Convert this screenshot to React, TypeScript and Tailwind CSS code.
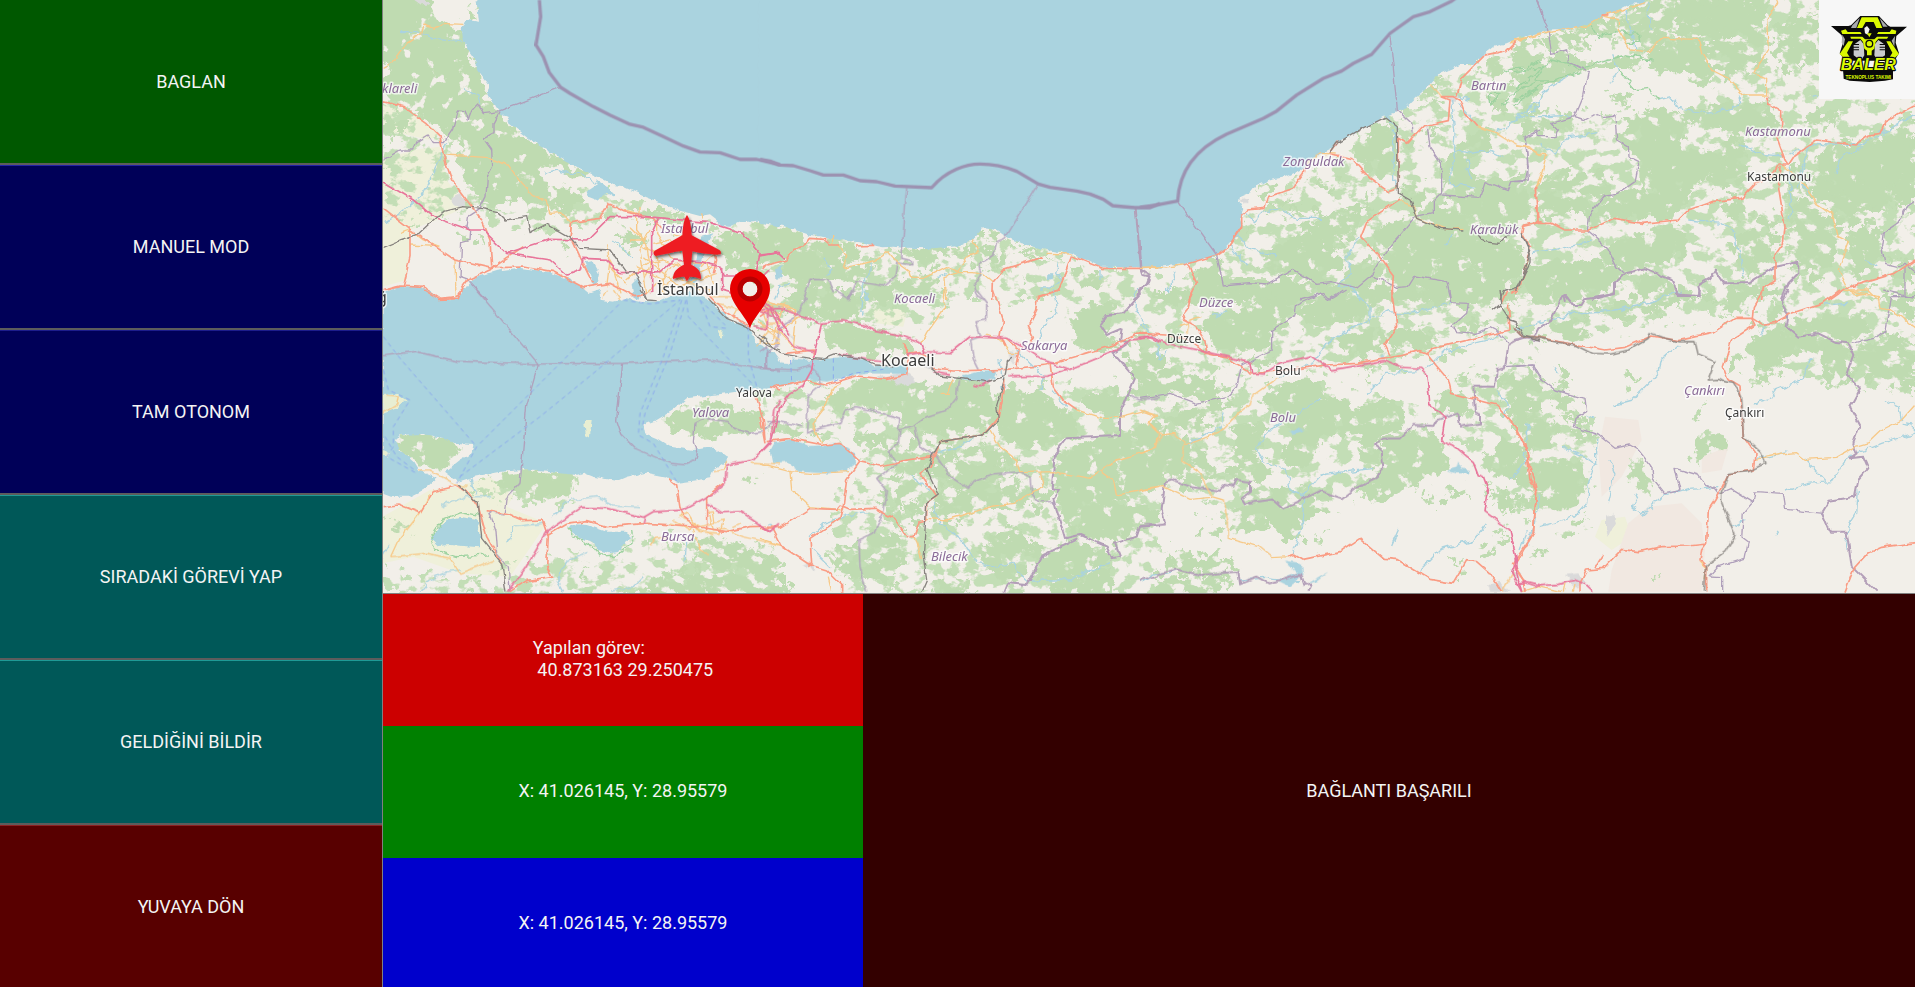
type Layer =
  | 'sea' | 'islet' | 'farm' | 'dry' | 'urban' | 'scatter' | 'dense' | 'sparse' | 'river' | 'park'
  | 'border' | 'province' | 'seaBorder' | 'rail' | 'primary' | 'trunk' | 'motorway' | 'ferry';

type Tile = { x: number; y: number } & Partial<Record<Layer, string[]>>;

/* The map is cut in tiles; path units inside a tile are a third of a map unit. */
const TILES: Tile[] = [
  {
    x: 380, y: 0,
    sea: [
      'M292 -30 1210 -30 1210 20 292 20Z',
      'M290 0 297 65 262 60 245 80 248 115 265 150 290 185 290 205 327 255 320 275 335 300 345 320 362 342 382 350 390 372 440 412 465 430 510 455 560 485 630 520 670 538 700 555 725 558 770 578 800 592 860 615 900 632 960 648 990 643 1015 662 1020 678 1050 680 1075 668 1130 662 1200 680 1200 0Z',
      'M225 900 245 880 270 845 300 828 350 812 420 803 500 815 560 835 600 855 630 880 635 900Z',
      'M8 872 60 858 130 862 180 895 240 900 8 900Z',
      'M612 785 635 780 657 820 650 850 640 852 625 815Z',
      'M620 575 650 555 648 538 680 560 710 590 700 592 680 578 650 600 625 590Z',
      'M755 850 775 830 785 880 775 900 760 890Z',
      'M950 760 965 710 1000 700 985 725 965 790 945 860 960 900 940 900 930 850Z',
    ],
    farm: ['M8 480 100 450 180 440 200 540 260 620 170 660 90 690 80 840 8 860Z', 'M8 310 100 340 180 400 150 420 60 400 8 400Z'],
    urban: ['M215 590 235 580 260 600 250 625 215 610Z', 'M100 0 150 0 150 10 120 14Z'],
    scatter: ['M8 300 100 330 200 420 240 500 330 620 560 640 560 560 640 560 800 610 960 650 1200 680 1200 860 1000 700 760 640 500 700 200 640 8 660Z'],
    dense: [
      'M-8 -20 150 -20 160 40 200 70 245 90 250 130 290 200 325 260 310 290 360 340 440 415 560 485 630 520 590 530 520 500 460 500 470 530 530 560 600 580 600 610 560 640 540 640 500 610 500 650 450 660 440 610 420 590 400 620 330 610 300 600 260 560 240 500 230 460 240 420 200 410 150 370 100 330 40 300 -8 240 30 200 -8 180Z',
      'M1010 705 1050 690 1090 690 1130 720 1140 780 1120 810 1070 820 1040 800 1030 760 1000 740Z',
      'M1130 670 1200 680 1200 760 1150 750 1130 700Z', 'M265 20 285 25 290 60 265 45Z',
    ],
    sparse: ['M8 330 60 340 70 380 50 420 8 400Z', 'M530 722 570 735 570 755 540 745Z', 'M288 712 310 710 305 750 293 745Z', 'M780 628 860 632 910 645 880 665 800 655Z', 'M720 690 800 720 770 750 720 735Z', 'M225 700 250 690 250 720 225 720Z'],
    river: ['M200 430 180 480 150 540 120 590 60 640 20 665', 'M60 95 110 95 160 115 245 122', 'M250 265 290 290 300 310', 'M490 520 530 510 560 520 600 520 620 530 650 550', 'M700 720 730 750 760 775'],
    seaBorder: ['M478 0 482 50 468 135 490 170 508 218 542 262 570 280 640 320 690 345 750 373 790 382 850 410 910 438 960 456 1020 458 1080 478 1130 478 1200 495'],
    province: ['M8 482 60 450 98 450 108 428 145 405 160 428 190 428 218 385 232 333 255 335 265 360 275 332 293 312 310 338 360 332 542 262', 'M360 335 342 370 342 398 310 415 335 450 338 500 322 530 318 590 300 625 262 650 258 680 272 692 270 718 245 725 240 832 262 840 320 900'],
    rail: ['M8 742 60 720 120 700 190 635 250 620 305 625 350 635 375 660 440 650 450 698 500 672 570 712 600 745 690 750 740 820 765 815 785 860 800 900'],
    primary: ['M8 202 40 185 80 130 125 100 132 75 165 85 190 70 250 73', 'M195 465 320 472 385 495 420 545 460 590 495 600 510 640 545 638 575 670 570 715', 'M225 780 228 890', 'M90 690 130 720 180 740 90 735', 'M90 690 60 700', 'M735 630 770 640 770 690 800 730 810 800 790 850', 'M750 680 790 720 750 720', 'M830 660 830 700 880 780 980 790 1000 850', 'M680 730 690 800 740 850', 'M790 770 900 860 1010 820', 'M680 860 690 780 700 800 720 880', 'M840 850 870 800 900 790 940 830 1000 800', 'M780 640 780 620', 'M810 690 780 750 800 880 830 850 870 860', 'M905 800 920 850 960 870', 'M970 660 965 640', 'M740 840 800 790 850 780 900 800', 'M820 730 870 720 900 760', 'M850 880 880 830 930 850 990 870', 'M960 800 990 770 1020 760', 'M770 800 850 840 850 880', 'M790 740 830 760 840 820', 'M880 700 940 720 990 750'],
    trunk: ['M8 305 70 320 140 370 180 410 190 465 215 540 260 600 305 660 330 720 335 800', 'M8 625 90 688 225 780 335 805 430 740', 'M90 690 90 770 70 860', 'M8 872 60 858 130 862 180 895 230 890 265 840 350 800 430 798 520 815 610 862 690 850 765 890 800 880', 'M570 712 575 668 660 655 685 612 735 635 820 655 850 690', 'M575 715 600 770 640 850', 'M1000 820 1010 780 1000 740'],
    motorway: ['M8 545 100 600 160 650 270 690 310 690 380 760 510 780 560 825 600 810 610 775 680 778 720 818 840 815 880 780 960 785 1020 800 1030 825 1080 825', 'M380 760 510 718 620 720 690 650 800 650 990 668 1090 700 1140 760 1130 810', 'M835 655 815 700 815 880', 'M1140 765 1200 758', 'M1025 800 1025 870 1060 880'],
  },
  {
    x: 380, y: 290,
    sea: ['M8 0 130 0 175 30 235 28 245 0 605 0 625 12 660 0 665 30 700 35 740 25 780 35 830 38 870 20 900 5 930 10 990 30 1060 95 1110 115 1130 160 1180 185 1205 220 1205 280 1180 290 1100 300 1040 310 920 325 880 360 830 390 790 405 795 430 830 445 870 470 940 480 1000 470 1040 500 1040 515 1000 540 990 565 940 572 895 578 860 560 800 548 740 560 710 573 640 560 610 548 590 555 500 545 430 540 360 545 280 560 235 575 195 545 240 510 275 490 280 465 230 462 190 445 130 432 60 435 45 450 60 480 100 515 115 540 170 565 130 600 90 620 30 620 8 612Z',
      'M152 745 200 690 240 680 290 690 300 740 300 772 250 768 210 765 175 768Z',
      'M570 702 620 705 650 715 680 725 740 725 755 740 730 760 715 785 690 790 655 780 640 755 600 745 575 725Z'],
    islet: ['M8 315 55 312 80 330 50 355 8 372Z', 'M612 393 635 393 630 435 618 440Z', 'M1015 125 1028 118 1026 142 1018 145Z', 'M10 480 28 488 20 500 8 496Z'],
    farm: ['M8 680 150 600 230 590 330 560 400 620 380 650 500 700 460 760 390 860 240 850 100 800 8 820Z'],
    scatter: ['M8 840 240 870 380 830 800 740 1200 800 1200 920 8 920Z', 'M250 590 600 560 560 640 380 640Z', 'M1100 60 1200 0 1200 160Z'],
    dense: ['M60 435 200 445 230 470 225 510 180 545 130 530 100 510 50 480Z', 'M330 555 430 540 590 550 575 610 500 630 420 620 370 590Z', 'M850 385 920 345 1000 330 1040 355 1140 370 1150 410 1100 430 1000 440 900 430 860 410Z'],
    sparse: ['M950 750 1030 740 1060 760 1180 780 1200 830 1200 925 800 925 790 870 880 850 960 830 930 780Z', 'M1090 560 1120 550 1130 570 1095 570Z', 'M12 325 50 325 40 345 12 345Z', 'M595 845 625 838 625 855 600 860Z', 'M255 880 280 885 275 905 258 905Z', 'M40 690 80 690 90 730 40 720Z'],
    park: ['M165 780 150 745 195 685 240 668 300 680', 'M560 710 590 745 640 770 660 798 710 795 760 750 755 720', 'M165 780 230 800 330 795'],
    river: ['M520 680 570 630 650 620 700 645 780 650', 'M380 760 400 710 490 700', 'M120 905 150 870 200 845 240 840', 'M550 905 530 870 560 815 620 790', 'M180 650 260 620 330 620', 'M30 760 8 800', 'M690 900 760 890 790 860', 'M915 810 920 760', 'M275 570 290 610'],
    province: ['M8 198 108 184 232 214 475 222 730 220 985 210 1200 242', 'M290 0 475 222 440 345 420 580 378 625 372 675 325 665 345 720 350 790 385 830 390 905', 'M728 220 710 390 725 435 765 475 870 520 915 524 945 512 952 490 940 460 945 400 975 385 1045 395 1060 415 1110 430 1150 425 1180 395 1200 395', 'M1158 235 1158 190 1200 160'],
    rail: ['M780 0 800 30 830 32', 'M985 25 1040 85 1100 110 1160 165 1200 180', 'M235 585 295 640 305 745 365 820 378 905'],
    primary: ['M112 540 150 540 230 585 260 590', 'M35 800 60 745 120 670 150 610', 'M35 800 140 790 210 805 240 850 340 812', 'M8 370 50 345 55 318 20 315', 'M880 690 930 720 940 700 900 680 960 710 1030 690 1020 730 960 725 930 680', 'M985 660 1000 720 1040 715', 'M870 700 920 710', 'M940 715 960 780 990 795', 'M1040 720 1090 740 1200 765', 'M1115 520 1200 525', 'M1005 545 1030 540 1040 510', 'M810 765 830 745 870 740', 'M665 25 680 0', 'M700 0 720 30', 'M1130 165 1160 130 1200 120', 'M1000 40 1080 60 1200 70', 'M1060 85 1090 30 1160 10', 'M895 680 925 670 950 715 1000 735', 'M980 670 1000 665 1005 700', 'M1060 710 1080 700', 'M990 20 1060 20 1100 60', 'M1130 90 1170 130 1200 150', 'M1140 40 1160 100 1200 100'],
    trunk: ['M8 650 60 645 120 668 160 605 230 588 270 610 295 650 320 740 365 820', 'M320 662 390 675 430 692 490 690 505 735 500 830 517 860 440 872 390 905', 'M500 735 560 700 620 692 680 710 800 700 940 708 1040 725 1110 710 1200 708', 'M865 565 890 585 900 650 910 680 950 710', 'M980 720 980 620 1030 580', 'M1128 320 1150 390 1155 450', 'M0 5 60 -10', 'M130 0 175 28 235 26 243 0', 'M1170 290 1200 300', 'M970 0 1030 60 1110 110'],
    motorway: ['M385 905 440 830 500 725 605 652 680 655 790 682 820 665 910 660 1000 610 1035 580 1040 525 1120 510 1170 460 1185 360 1200 330', 'M980 640 1025 668 1080 665 1170 725 1200 700', 'M790 700 795 680', 'M1130 60 1200 90', 'M1120 110 1160 120 1165 60 1130 20'],
    ferry: ['M10 140 60 205 290 470 230 580', 'M300 460 540 220 720 40', 'M240 560 480 380 640 250 900 30', 'M905 30 850 200 780 370 775 435 820 460 890 575', 'M918 30 870 190 795 370 785 420', 'M920 30 925 80 1120 285', 'M1105 110 1105 200 1130 290', 'M730 30 810 42 900 30', 'M960 30 990 110 1040 115', 'M960 30 1035 105', 'M10 240 25 300 90 330 40 410 40 470 20 500 110 550', 'M15 440 50 500 110 545'],
  },
  {
    x: 760, y: 0,
    sea: ['M-5 -30 1205 -30 1205 20 -5 20Z', 'M-5 668 70 678 130 698 150 705 200 712 220 718 260 722 320 730 350 738 370 742 400 740 430 743 520 745 600 738 640 718 668 685 710 690 740 712 800 735 860 750 935 762 980 780 1025 800 1140 802 1205 806 1205 0 -5 0Z', 'M45 805 65 795 68 830 50 840Z', 'M865 820 880 820 878 838 864 838Z'],
    scatter: ['M0 690 400 750 660 700 1000 800 1200 810 1200 900 0 900Z'],
    dense: ['M0 668 130 698 150 720 100 770 20 790 0 780Z', 'M100 760 150 720 230 730 260 800 350 790 330 830 300 860 200 840 130 870 120 900 60 900 120 850 60 810Z', 'M240 725 320 740 300 775 260 780Z', 'M930 800 1010 820 1020 880 960 850Z', 'M320 870 420 850 400 905 300 905Z'],
    sparse: ['M430 743 600 740 640 720 640 760 540 770 520 800 440 790Z', 'M640 690 720 690 720 710 650 715Z', 'M630 745 700 740 680 795 640 790Z', 'M700 780 750 770 745 800 690 810Z', 'M400 850 500 830 550 850 540 905 400 905Z', 'M780 750 880 765 810 770Z', 'M720 735 755 730 745 750Z', 'M795 835 815 835 810 855 795 855Z', 'M140 840 210 850 200 900 130 900Z'],
    river: ['M330 780 330 830 310 840 320 900', 'M895 785 890 820 905 840 870 870 840 870', 'M530 830 560 820', 'M1020 810 1020 840', 'M45 900 60 860 90 850', 'M190 770 210 810 200 830'],
    seaBorder: ['M0 478 30 483 60 495 100 497 150 512 190 525 250 525 300 542 350 545 405 558 515 563C560 510 620 492 660 492C720 492 760 510 770 514L835 552 870 562 950 573 990 582 1030 598 1058 617 1090 620 1125 623 1170 623 1200 610'],
    province: ['M440 563 425 775 455 782 455 795 410 788 405 830 370 858 290 845 265 900', 'M835 552 735 715 710 725 700 765 655 795 665 825 640 855 650 885 670 900', 'M130 900 150 838 205 840 220 880'],
    border: ['M1127 625 1143 805', 'M1143 805 1150 825 1172 830 1165 850 1135 870 1140 885 1120 900'],
    primary: ['M218 705 218 730', 'M235 730 260 770 250 805 350 780 385 755 410 785 450 815 455 835 490 835 560 800 595 815 640 815 670 820 700 845', 'M560 900 555 830 590 820 625 765 655 755 640 718', 'M860 760 935 762', 'M1140 805 1195 805'],
    trunk: ['M8 810 20 795 80 780 105 745 130 740 148 715 195 718 210 732 240 732', 'M288 738 343 736', 'M698 900 700 845 730 808 850 770', 'M830 890 895 870 915 820 935 768 1025 805 1140 805'],
    motorway: ['M0 768 55 757 75 775', 'M0 840 30 810'],
  },
  {
    x: 760, y: 290,
    sea: ['M0 170 30 175 45 215 90 220 100 205 160 210 210 205 250 200 320 210 340 228 440 225 450 240 440 252 330 250 290 255 200 275 150 270 90 280 40 290 0 295Z', 'M590 265 650 245 690 240 712 250 705 265 680 275 620 270Z', 'M32 480 45 455 90 448 150 468 200 465 240 460 285 490 288 520 260 542 200 550 120 545 80 515 40 520Z', 'M20 705 35 700 30 710Z'],
    farm: ['M335 60 400 20 440 70 430 110 350 100Z'],
    urban: ['M340 265 450 245 470 280 430 290 400 270Z', 'M490 225 520 225 520 250Z', 'M745 180 770 185 760 220 750 215Z', 'M80 130 110 140 110 155Z', 'M130 825 160 815 165 840Z'],
    scatter: ['M0 0 600 0 500 130 200 100 0 60Z', 'M0 300 1200 280 1200 920 260 920 200 650 300 560 320 440 0 420Z', 'M900 0 1200 0 1200 120 940 160Z'],
    dense: ['M190 110 270 100 430 140 470 180 340 200 200 170Z', 'M200 330 280 270 340 265 560 280 590 270 700 290 720 390 600 430 500 440 430 420 420 370 290 345 220 370Z', 'M720 300 830 310 940 370 960 430 870 470 830 460 790 480 720 440 700 400Z', 'M940 80 980 45 1060 40 1060 90 1030 140 1080 160 1010 180 940 165Z', 'M880 500 1000 440 1200 390 1200 590 1060 640 1200 660 1200 700 1130 710 1070 760 960 740 900 700 890 600Z', 'M870 890 1050 830 1060 920 870 920Z', 'M840 800 940 750 1050 780 1050 820 930 870 830 860Z', 'M960 320 1060 290 1100 330 1090 370 1000 370Z', 'M60 70 150 0 260 0 310 40 300 90 200 80 100 70Z'],
    sparse: ['M1100 200 1200 160 1200 300 1130 330Z', 'M390 480 480 440 560 500 700 520 760 560 640 590 560 600 520 540 430 560 400 540Z', 'M520 620 660 570 830 590 870 640 760 660 700 640 600 680 520 720Z', 'M680 740 760 710 840 760 800 860 720 880 670 820Z', 'M210 800 330 720 420 750 440 800 400 870 260 870Z', 'M440 640 490 640 500 690 450 690Z', 'M0 870 60 870 100 920 0 920Z', 'M520 890 560 850 640 880 650 920 520 920Z', 'M30 395 180 420 190 450 90 440Z', 'M280 420 390 440 400 480 300 470Z', 'M390 560 470 570 500 620 400 640Z', 'M560 480 700 460 760 520 640 540Z', 'M1060 160 1130 170 1110 200 1060 190Z', 'M350 640 420 650 440 720 390 700Z'],
    river: ['M530 490 600 470 640 440', 'M520 640 540 700 600 740 650 820 700 830 760 820 790 870 930 870 1050 815', 'M150 740 190 700 280 670 330 665', 'M160 780 210 830', 'M880 0 890 60 840 130 830 160', 'M310 0 305 80', 'M720 210 730 300', 'M1130 0 1125 60 1160 110', 'M770 180 850 260 840 300', 'M450 560 510 600', 'M880 300 920 350'],
    province: ['M0 235 110 240 150 228 172 250 185 282 145 315 140 430 180 415 240 400 255 365 285 350 330 360 420 385 415 420 460 410 500 380 560 360 590 320 595 270', 'M420 420 415 460 385 485 408 520 350 565 382 605 370 670 340 730 297 750 300 830 320 905', 'M465 410 480 470 530 500 570 560 625 595 640 575 700 555 780 548 810 560 815 610 835 635 885 635', 'M20 395 60 395 130 410', 'M50 165 60 110 110 80 140 20', 'M650 0 680 40 680 90 645 95 660 140 632 150 640 210 655 240', 'M0 185 20 170 20 235', 'M1100 315 1140 330 1200 322', 'M225 0 265 25 285 0'],
    border: ['M1140 0 1135 20 1090 70 1040 75 1020 105 1040 135 1085 115 1080 150 1105 160 1060 190 1125 265 1080 370 1080 438 920 445 885 490 875 595 898 600 880 625 915 745 960 735 1040 770 1055 805 1080 800 1065 760 1130 740 1140 710 1200 705', 'M955 745 850 795 800 885 740 880 730 905'],
    rail: ['M0 135 60 190 150 205 190 208 225 195 300 205 345 225 400 228', 'M510 235 540 258 680 275 735 260 742 215 760 200', 'M735 265 710 350 715 390 670 435 540 455 515 500 500 540 535 615 500 640 490 800 500 870 485 905'],
    primary: ['M555 0 550 60 500 130 485 160', 'M680 135 720 150 750 190 780 190', 'M690 420 720 470 770 510 780 548 880 545 990 565 1070 510 1190 475 1195 430 1165 400 1190 375', 'M1025 545 1060 570 1070 615 1200 592', 'M500 685 560 690 700 648 760 640 850 590 840 545', 'M560 310 580 270', 'M185 460 155 400 190 355 220 290 240 280', 'M0 522 90 545 150 550 270 545', 'M90 545 95 600 150 650 250 660', 'M950 360 1020 382 1080 382 1150 365 1190 380', 'M0 745 70 770', 'M0 60 50 40 110 60 100 180', 'M40 150 70 40', 'M60 120 120 80', 'M0 100 60 130 110 185', 'M215 905 205 860', 'M465 740 480 790 485 810', 'M545 310 570 310', 'M0 30 70 50 110 70', 'M10 160 60 160'],
    trunk: ['M40 290 90 283 140 272 200 285 290 258 380 268 440 255 445 200 435 160', 'M510 235 580 243 740 238 860 225 1060 165 1130 132 1200 135', 'M700 0 730 90 720 140 735 170', 'M900 0 835 20 830 60 805 110 820 140 805 165', 'M735 145 780 180 770 230', 'M870 220 880 290 910 330 950 358', 'M0 380 15 460', 'M20 455 90 445 190 465 240 460 300 515 360 528 440 510 520 500', 'M300 515 260 570 250 645 240 685 150 745 155 820 145 830', 'M0 715 60 712 150 655 230 658 240 645 270 658 345 655 400 685 440 740 465 740 480 695 500 690', 'M35 715 60 765 150 825 200 840 245 885 245 905', 'M500 690 500 640 530 620 480 550 510 530 540 455 670 435 715 380 735 270', 'M80 190 160 180 160 200', 'M430 160 440 190 480 185 510 200', 'M0 80 40 50'],
    motorway: ['M0 60 60 55 120 75 180 100 250 92 310 105 340 120 420 135 485 160 495 185 570 188 630 140 740 145 780 165 850 210 930 238 1060 185 1110 150 1170 142 1200 155', 'M495 185 440 195', 'M745 260 860 258 920 240', 'M185 100 165 180 155 240 130 285 90 310 60 350 35 450 0 490', 'M30 55 60 120 100 170 160 185', 'M240 195 340 212 370 215', 'M520 245 570 255', 'M640 285 660 290 690 270', 'M0 705 30 728', 'M0 20 40 60 90 140'],
    ferry: ['M92 210 95 275', 'M220 205 220 275 280 250 370 238'],
  },
  {
    x: 1140, y: 0,
    sea: ['M0 -30 1205 -30 1205 20 0 20Z', 'M0 806 60 800 130 792 180 780 240 760 265 735 290 708 305 680 300 655 310 630 297 605 300 590 335 575 345 560 390 540 440 530 490 505 510 488 540 462 575 445 600 425 640 400 690 375 730 352 745 345 790 330 830 290 870 255 900 220 960 195 1000 195 1035 160 1060 140 1100 130 1140 112 1205 100 1205 0 0 0Z'],
    urban: ['M300 600 325 595 325 615 305 615Z', 'M930 290 950 290 945 305 930 305Z'],
    scatter: ['M180 790 330 640 600 440 760 350 900 240 1200 120 1200 900 0 900Z'],
    dense: ['M350 790 420 730 540 680 600 690 560 770 620 780 560 850 480 880 440 820 400 850 250 850 240 770 180 800 160 860 200 905 480 905 600 870 540 850Z', 'M690 690 820 640 880 670 1000 690 1140 740 1160 800 1100 860 1060 905 760 905 740 800 700 740Z', 'M905 500 930 470 1010 390 1060 400 1060 440 980 480 1010 540 1110 540 1160 500 1160 650 1050 690 980 650 930 600 900 580Z', 'M620 800 700 770 730 830 640 880 600 860Z', 'M340 580 400 540 410 560 370 600Z', 'M630 450 720 370 765 390 765 500 720 540 670 500Z', 'M240 830 620 850 760 860 760 905 240 905Z', 'M880 600 980 650 1050 700 860 690 830 650Z'],
    sparse: ['M380 620 450 590 460 610 400 640Z', 'M520 530 590 550 590 570 530 560Z', 'M1000 200 1200 130 1200 200 1050 215Z', 'M1040 280 1200 230 1200 270 1080 330 1040 320Z', 'M1150 340 1200 320 1200 430 1150 400Z', 'M840 290 900 230 905 290 870 305Z', 'M790 420 920 380 800 450Z', 'M480 680 640 620 700 580 680 640 640 720 560 760Z', 'M775 340 790 335 780 360Z', 'M430 640 560 640 540 660 440 655Z', 'M310 665 345 665 340 685Z', 'M780 560 870 560 850 620 790 600Z', 'M1060 840 1140 870 1120 905 1060 900Z'],
    park: ['M1090 215 1110 205 1160 205 1200 180', 'M1050 315 1080 280 1045 280 1050 315', 'M1085 320 1120 280 1200 240', 'M1120 315 1200 260'],
    river: ['M320 640 340 665 370 635 420 630 470 655 540 655', 'M290 705 330 745 410 768', 'M270 740 320 795', 'M660 705 620 770 635 820 590 855 640 860 660 900', 'M935 300 945 400 930 550 1010 568', 'M940 450 1000 460 1050 450 1090 470', 'M980 480 995 540', 'M1070 390 1100 385 1140 340 1200 305', 'M760 390 765 560', 'M100 810 105 840 80 860 80 880', 'M940 700 920 730', 'M740 345 775 390', 'M950 290 990 300', 'M955 310 1000 360'],
    seaBorder: ['M0 622 50 615 113 603C118 500 180 440 260 402L370 355 410 333 470 285 550 235 605 213 640 190 695 163 750 100 820 50 870 35 935 3 960 -15'],
    province: ['M113 603 230 765 250 855 330 848 380 852 460 808 530 850 570 845 650 862 695 825 770 862 805 860 825 828 920 845 935 905', 'M750 105 772 330 815 370 820 398', 'M862 380 870 440 905 490 905 580 880 605 880 638 825 650 785 700 750 740 695 825', 'M905 585 1020 592 1035 545 1105 572 1115 545 1165 540 1160 450 1155 415 1200 390', 'M480 900 550 880 570 900 620 870', 'M1190 0 1205 40', 'M0 720 5 805'],
    border: ['M0 805 30 825 20 850 0 870'],
    rail: ['M570 460 590 430 650 395 735 352 772 380 775 580 810 600 830 655 900 685 970 690', 'M1015 705 1030 725 1080 730 1110 700', 'M1145 705 1170 760 1140 860 1090 875 1080 900'],
    primary: ['M10 805 60 803 130 795', 'M500 490 540 460 590 462', 'M870 250 905 290', 'M780 600 820 620 830 655 920 688 970 685', 'M1010 380 1070 398 1130 435 1170 440 1205 470', 'M1205 520 1190 560', 'M1110 130 1205 98'],
    trunk: ['M130 795 230 765 265 740 305 680 305 645 320 630 375 625 385 590 455 567 490 520 495 500', 'M570 460 595 425', 'M570 465 600 470 640 480 690 535 745 575 775 565 775 415 800 430 850 378 925 362 930 300 905 290 940 290 960 300 975 340 1010 380', 'M950 290 965 235 1030 170 1100 155 1130 125', 'M780 597 680 665 662 710 710 760 760 825 755 905', 'M145 795 170 850 145 905', 'M1205 665 1150 675 1145 700 1170 745', 'M1190 560 1190 660', 'M1110 880 1140 860'],
  },
  {
    x: 1140, y: 290,
    sea: ['M450 425 470 415 490 420 460 435Z', 'M920 540 950 530 955 515 965 535 990 540 990 550 945 550Z', 'M435 812 485 820 490 855 450 890 410 870 470 850Z', 'M505 880 565 845 530 875Z', 'M720 200 733 190 730 205Z'],
    urban: ['M1045 885 1080 875 1110 905 1050 905Z', 'M1115 840 1140 850 1130 870Z'],
    scatter: ['M0 0 1200 0 1200 120 900 200 700 240 480 230 440 200 300 250 0 250Z', 'M0 300 480 270 820 340 900 420 760 580 480 660 300 700 100 580 0 600Z', 'M950 260 1200 220 1200 680 1080 640 1020 520 940 420Z'],
    dense: ['M50 0 330 0 180 40 60 50Z', 'M190 90 400 20 480 60 600 0 700 0 700 60 640 100 500 110 470 70 400 120 390 180 240 190 200 150Z', 'M0 260 90 240 200 270 280 310 200 340 110 310 0 330Z', 'M360 320 460 280 550 270 540 330 600 310 640 360 700 340 720 330 790 340 800 400 730 440 700 470 640 430 560 440 500 530 440 530 430 490 470 420 400 390Z', 'M720 450 880 410 910 460 920 530 800 600 720 640 630 600 700 560 730 520Z', 'M800 0 1000 0 990 60 960 60 930 30Z', 'M880 330 930 300 1000 330 1000 370 920 380Z', 'M1040 500 1080 440 1150 460 1160 560 1100 570 1040 540Z', 'M740 130 800 110 890 130 890 160 800 180 740 160Z', 'M660 430 740 300 740 350 800 380 720 450 720 540 670 520Z', 'M0 470 60 430 130 450 130 500 120 540 60 590 0 600Z', 'M280 410 370 400 360 460 330 500 290 500Z', 'M340 640 480 640 480 690 470 750 430 750 400 700Z', 'M580 150 720 110 730 160 690 200 620 190Z'],
    sparse: ['M960 90 1030 80 1060 110 980 130Z', 'M280 410 370 400 360 480 380 560 320 580 270 560 290 500Z', 'M100 450 150 450 200 500 260 560 180 590 90 570Z', 'M1080 250 1150 230 1200 270 1200 400 1130 390 1090 350Z', 'M340 600 500 590 600 620 580 660 480 690 470 750 430 750 400 700 330 710 280 740 270 680Z', 'M840 620 980 590 960 620 880 640Z', 'M60 830 150 780 290 820 290 850 60 850Z', 'M40 870 260 850 260 880 210 925 40 925Z', 'M165 720 250 710 240 740 170 740Z', 'M530 740 560 730 550 760 530 765Z', 'M1030 790 1090 710 1095 750 1040 810Z', 'M340 200 390 210 370 240 330 230Z', 'M1050 600 1120 620 1120 670 1060 650Z', 'M940 270 1010 250 1000 290Z', 'M50 380 200 340 300 320 180 410 70 420Z', 'M665 235 695 235 685 260Z', 'M935 840 960 810 965 840Z'],
    river: ['M0 100 50 150 60 215 80 180', 'M420 265 520 215 560 160 640 110 740 65 800 70 930 40', 'M640 0 690 50 690 100', 'M680 315 740 250 840 245', 'M860 235 910 185 1080 140', 'M140 465 240 410 250 365', 'M540 325 490 360 400 410 345 470 370 510 440 540 450 600 495 615 490 690 460 790', 'M490 615 540 555 700 535', 'M835 845 900 780 1000 750 1040 700', 'M755 765 775 720', 'M1065 300 1110 350 1090 380', 'M1200 610 1180 720 1150 780', 'M1160 400 1165 460', 'M1110 560 1140 540', 'M215 80 260 65', 'M0 870 60 850 110 840', 'M300 870 370 865 480 875'],
    province: ['M0 325 90 310 170 340 260 320 290 290 305 225 395 180 395 120 465 75 470 45 540 12 565 30 610 0', 'M930 0 935 38 985 40 980 70 935 110 950 125 1010 130 1050 110 1070 120 1105 160', 'M1090 230 1180 225 1200 260'],
    border: ['M0 708 75 700 65 660 75 575 95 568 160 592 240 602 255 585 280 590 290 570 330 575 330 605 305 625 315 640 400 628 430 655 540 602 605 625 650 590 715 560 730 530 725 480 705 465 730 445 780 445 820 405 880 408 890 390 955 370 960 410 1020 400 1020 375 1005 370 1000 290 1065 290 1070 240 1095 235 1105 165 1150 140 1200 150', 'M0 870 40 860 60 850 110 838 180 855 295 845 300 880 350 860 385 880 480 855 490 885 515 880 505 905'],
    rail: ['M1080 0 1085 40 1060 60 1080 45 1110 90 1125 95 1150 135 1200 150'],
    primary: ['M0 360 45 375 25 400 65 435 100 430 135 460 125 510 175 545 215 620 250 630 265 700 265 745 300 755 355 770 395 803 450 800', 'M65 435 45 475 0 490', 'M415 262 340 315 330 345 285 380 240 425 135 468', 'M0 600 70 590 150 628 215 622', 'M140 130 150 90 180 80', 'M1085 905 1120 850', 'M120 110 150 100'],
    trunk: ['M155 0 145 50 125 75 130 90 170 110 195 150 200 185', 'M0 130 80 135 140 150 200 190 265 205 320 240 330 252 480 235 560 225 650 220 750 200 840 182 860 190 880 175 1110 120 1105 40', 'M755 0 765 50 770 110 735 165 750 195', 'M858 190 925 270 935 310 1070 345 1120 400 1160 480 1170 570 1190 605 1180 730 1120 820', 'M440 800 465 793 490 808 600 785 660 745 730 805 770 808 870 868 940 880 980 812 1010 815 1050 850 1085 905', 'M1120 820 1150 870 1155 905', 'M1085 40 1100 5'],
    motorway: ['M0 145 40 142 80 160 240 195 330 218 335 250 370 252 425 218 515 198 575 240 660 225 730 212 780 232 845 235 860 250 870 345 915 385 905 450 940 465 1000 515 1015 555 1030 560 1045 600 1035 665 1110 720 1130 810 1115 850 1145 905', 'M1135 880 1160 875 1200 885'],
  },
  {
    x: 1515, y: 0,
    sea: ['M0 -30 392 -30 388 10 0 20Z', 'M0 112 50 105 100 92 170 88 220 72 262 50 300 35 350 10 390 0 0 0Z'],
    scatter: ['M300 30 480 -20 1200 -20 1200 905 0 905 0 350 480 330 640 240 400 170 200 90Z'],
    dense: ['M330 360 430 320 510 350 500 450 560 450 640 480 640 520 560 540 480 650 300 660 240 680 220 650 290 590 370 560 370 480 310 430Z', 'M250 760 360 700 500 680 510 780 380 800 320 820Z', 'M0 180 160 160 220 190 330 170 410 180 330 210 220 210 130 240 0 300Z', 'M400 160 480 110 560 120 600 220 560 260 500 220 420 220Z', 'M500 20 740 0 740 60 660 100 560 110 470 90Z', 'M490 330 640 310 760 310 790 350 790 400 640 400 500 360Z', 'M40 800 200 770 300 800 320 850 200 905 40 905Z', 'M380 810 470 850 490 880 360 890Z', 'M960 440 1060 430 1180 400 1200 580 1100 610 1000 650 930 560Z', 'M1000 700 1090 680 1100 780 1010 840Z'],
    sparse: ['M290 60 400 -20 780 -20 750 60 760 130 710 220 640 230 590 190 560 120 450 115 400 160 340 110Z', 'M230 90 370 90 380 130 300 110Z', 'M790 60 910 40 910 180 790 220Z', 'M640 400 700 430 700 540 600 570 540 500Z', 'M40 380 130 350 200 370 130 400 60 400Z', 'M60 540 180 510 290 520 290 590 220 640 80 650 60 600Z', 'M650 720 790 640 780 780 690 840Z', 'M820 580 960 650 980 760 900 860 820 790Z', 'M920 440 1100 410 1200 350 1200 600 1100 640 1000 700 940 620 870 560Z', 'M560 870 680 850 790 860 780 890 560 905Z', 'M860 370 960 320 970 370 900 400Z', 'M80 110 220 90 230 130 120 160Z', 'M0 120 90 130 80 170 0 180Z', 'M820 500 870 490 850 620 820 610Z', 'M1110 770 1200 800 1200 860 1150 850Z', 'M280 290 340 280 330 310Z', 'M0 340 120 320 190 360 80 370Z', 'M620 600 700 590 720 640 640 660Z', 'M150 30 290 50 310 90 160 95Z'],
    park: ['M0 215 80 205 110 180 200 205 330 165 410 180', 'M0 270 90 200 60 240 130 240', 'M0 300 100 245 200 215', 'M310 210 360 270 400 265 435 300', 'M230 75 250 110 300 95 370 100 375 130 330 130'],
    river: ['M330 30 350 90 360 150', 'M400 0 400 50 410 90', 'M430 300 470 290 490 325 580 340 660 320 680 290', 'M0 360 70 320 80 280 160 230', 'M80 430 120 460 160 410 250 398', 'M670 430 740 460 800 465', 'M820 500 830 620 820 670', 'M870 470 860 540 880 580', 'M820 465 900 430 1030 435 1100 400 1200 340', 'M960 520 970 480 1040 440', 'M520 660 620 670 660 700 690 835', 'M50 758 140 745 230 720', 'M0 350 100 350 170 345', 'M910 290 890 285', 'M1050 780 1090 800', 'M285 250 310 210 290 160', 'M880 440 860 500 850 560'],
    province: ['M65 0 100 95 110 160 155 150 160 185 220 215 205 290 180 350 110 370 130 390 120 410 70 410 65 390 30 410 40 500 30 545 0 545', 'M180 350 210 360 245 340 265 350 300 345 305 420 340 440 342 470 372 485 360 545 310 580 270 585 225 640 217 690 275 740 305 800 325 820', 'M1200 605 1165 630 1150 670 1105 700 1100 740 1110 790 1150 800 1170 790 1200 815', 'M1170 800 1170 890'],
    border: ['M230 900 300 880 300 850 330 820 390 805 470 840 490 885 555 885 550 855 585 835 600 812 625 850 700 850 780 800 850 785 850 820 820 850 800 900', 'M145 885 150 905'],
    rail: ['M18 700 45 755 45 790 20 840 5 870'],
    primary: ['M0 120 60 108 100 95 220 75 265 45 320 30 390 5', 'M265 48 310 60 310 90 345 150 400 155 440 115 550 118 560 160 590 210 640 235 685 285 755 285 755 235 715 220 760 150 755 60 785 10 780 -10', 'M30 435 65 460 95 465 80 520 65 560', 'M800 495 820 510 870 560 905 610 950 640 970 710 1000 725 970 810 1000 870 1060 870 1090 900', 'M0 435 40 440', 'M1000 870 1020 885 1050 880'],
    trunk: ['M755 290 760 310 800 335 800 390 785 410 810 480 820 495 790 495 770 530 720 550 680 595 590 605 520 630 490 660 380 670 300 655 220 690 150 690 110 670 70 670 60 560', 'M20 680 70 668', 'M820 495 840 465 905 420 1020 435 1060 405 1095 400 1110 365 1200 315', 'M795 500 790 560 810 680 805 730 780 765 780 840 745 860 740 900', 'M940 900 990 865 1040 850 1140 820 1200 780', 'M45 755 20 850 0 880', 'M260 45 280 45'],
  },
  {
    x: 1515, y: 290,
    dry: ['M290 840 340 700 400 650 500 640 560 700 570 780 560 905 280 905Z', 'M250 480 270 380 370 390 380 450 320 560 260 620Z', 'M560 500 640 470 620 540 560 550Z'],
    farm: ['M260 690 330 680 350 740 290 780 240 740Z'],
    urban: ['M270 680 295 675 300 700 280 740 270 715Z', 'M150 855 190 850 210 880 180 890Z', 'M685 60 700 55 700 80Z'],
    scatter: ['M0 0 800 0 600 80 300 110 100 130 0 100Z', 'M820 0 1200 0 1200 300 940 280 720 220 740 120Z', 'M0 260 130 300 240 420 230 600 0 660Z'],
    dense: ['M820 80 1060 70 1060 130 1000 160 900 130 850 140Z', 'M525 500 540 450 580 425 635 445 630 470 590 470 550 530Z', 'M335 520 370 500 410 570 400 610 370 600Z', 'M110 120 170 80 220 90 220 130 160 150Z', 'M0 260 40 280 30 400 120 390 130 440 40 500 0 500Z', 'M45 510 200 510 220 600 150 660 60 650Z', 'M700 170 790 110 900 140 1000 170 960 200 870 180 790 200 740 240Z', 'M920 180 1000 170 1010 280 930 290Z'],
    sparse: ['M200 60 310 40 480 0 560 20 440 60 290 90Z', 'M730 60 800 30 810 90 730 110Z', 'M700 170 790 110 900 140 870 180 790 220 770 290 720 260Z', 'M1010 10 1200 10 1200 100 1120 60 1080 20Z', 'M1010 170 1120 130 1200 160 1200 300 1040 280Z', 'M0 530 50 550 60 640 0 650Z', 'M120 740 210 680 200 710 150 760Z', 'M335 265 360 250 365 275 345 282Z', 'M125 240 160 240 160 300 130 290Z', 'M530 380 565 340 560 380 535 395Z', 'M630 200 680 190 660 240 630 250Z', 'M50 790 90 770 100 790 60 815Z', 'M415 860 440 850 430 880Z', 'M580 85 605 85 600 105Z', 'M50 160 80 160 70 200 45 205Z', 'M610 60 650 10 700 0 700 50 650 80Z', 'M100 300 170 310 190 350 150 370Z', 'M130 370 220 400 240 460 180 430Z'],
    river: ['M0 120 60 105 180 70 300 60 430 30 500 0', 'M490 165 440 210 430 250 350 330 295 345', 'M890 200 860 270 780 300 760 330 710 345', 'M150 475 210 500 245 525 245 440', 'M240 520 220 580 215 640 180 680 75 710', 'M285 510 300 550 280 640', 'M370 610 350 650 380 675 440 620 520 595 610 590', 'M810 600 880 580 950 575 1000 500 1100 460 1195 430 1195 405 1160 400', 'M870 510 930 575', 'M725 505 820 485', 'M1030 600 1025 670 1000 710 990 780', 'M650 710 690 690', 'M780 740 790 725', 'M40 720 15 780', 'M1110 330 1150 350 1160 390', 'M0 560 30 510 40 400', 'M930 45 1000 40', 'M740 135 760 100', 'M215 375 235 385', 'M120 235 130 250'],
    province: ['M0 230 50 225 75 265 120 300 210 325 215 365 180 385 175 410 250 435 300 475 345 465 370 480 410 530 415 570 445 608 495 600 480 535 550 555 570 585 600 600 610 612 650 595 715 635 685 670 680 740 700 755 690 805 610 830 585 858 620 860 620 905', 'M715 635 720 605 805 610 812 658 925 670', 'M1010 160 1080 145 1110 120 1130 20 1200 20', 'M1105 0 1200 25'],
    border: ['M60 135 70 115 110 90 140 20 150 15 175 45 200 45 210 28 300 12 300 0', 'M0 150 40 140', 'M820 0 800 40 820 75 815 110 850 140 910 130 960 155 1000 160 1015 195 995 250 1035 295 1005 350 1035 405 1015 460 1025 490 1005 505 1045 500 1060 535 1030 570 1020 620 940 632 920 665 945 725 995 725 1010 830 1085 905', 'M480 10 550 15 555 0'],
    rail: ['M0 115 25 140 60 140 120 155 180 165 230 190 290 192 340 180 400 145 405 128 440 142 490 155 540 155 550 195 600 215 580 270 610 268 630 275 655 280 680 320 685 440 735 485 750 520 700 545 640 550 620 610 620 635 660 735 630 785 575 825 568 905'],
    primary: ['M720 508 800 492 845 488 870 508 965 502 1020 470 1060 458 1100 420 1160 390 1200 345', 'M985 0 1050 10 1090 20 1095 55 1130 60 1160 80 1200 115', 'M555 815 575 835 570 870', 'M20 905 70 890 140 905', 'M150 880 145 905', 'M175 905 180 885'],
    trunk: ['M0 115 25 140 60 140 130 155 270 180 330 172 410 138 490 152 590 130 660 85 710 85 720 105 650 150 625 230 640 270 675 290 685 440 720 490 715 540 640 552 600 630 580 660 575 760 560 780 555 810 575 830 575 905', 'M745 0 715 50 712 85 740 103 780 98 830 70 920 40 975 0', 'M0 420 30 460 45 530 65 605 55 730 10 810', 'M195 905 195 880 215 840 265 835 320 778 370 785 440 770 520 768 575 762', 'M240 832 265 795', 'M990 905 1015 840 1060 790 1100 772 1200 758', 'M0 835 25 870 30 905'],
    motorway: ['M0 880 30 878 60 888 130 883 180 870 215 885 235 905', 'M0 800 5 850 20 905'],
  },
];

const STYLES: [Layer, string, string, number, string?][] = [
  ['farm', '#eff0da', 'none', 0],
  ['dry', '#f1e8e1', 'none', 0],
  ['scatter', '#c3deb6', 'none', 0, 'url(#woodScatter)'],
  ['sparse', '#bfdbb1', 'none', 0, 'url(#woodSparse)'],
  ['dense', '#bfdbb1', 'none', 0, 'url(#woodDense)'],
  ['urban', '#dadada', 'none', 0, 'url(#ragged)'],
  ['sea', '#aad3df', 'none', 0, 'url(#coast)'],
  ['islet', '#e8eed2', 'none', 0, 'url(#coast)'],
  ['river', 'none', '#aad3df', 4, 'url(#ragged)'],
  ['park', 'none', '#9ed2a0', 4, 'url(#ragged)'],
  ['border', 'none', '#b39fb8', 6, 'url(#wiggle)'],
  ['province', 'none', '#b0a0bb', 4, 'url(#wiggle)'],
  ['primary', 'none', '#f7c988', 4, 'url(#wiggle)'],
  ['trunk', 'none', '#fa9c84', 5, 'url(#wiggle)'],
  ['motorway', 'none', '#e8759a', 5, 'url(#wiggle)'],
  ['rail', 'none', '#87837f', 4, 'url(#wiggle)'],
  ['seaBorder', 'none', '#9c92b1', 10],
  ['ferry', 'none', '#8caaec', 3],
];

const LABELS: [string, number, number, 'city' | 'town' | 'area'][] = [
  ['klareli', 382, 93, 'area'], ['ğ', 377, 303, 'city'],
  ['İstanbul', 661, 233, 'area'], ['İstanbul', 657, 295, 'city'],
  ['Yalova', 736, 397, 'town'], ['Yalova', 692, 417, 'area'], ['Bursa', 661, 541, 'area'],
  ['Kocaeli', 894, 303, 'area'], ['Kocaeli', 881, 366, 'city'], ['Sakarya', 1021, 350, 'area'],
  ['Bilecik', 931, 561, 'area'], ['Zonguldak', 1283, 166, 'area'], ['Bartın', 1471, 90, 'area'],
  ['Karabük', 1470, 234, 'area'], ['Düzce', 1199, 307, 'area'], ['Düzce', 1167, 343, 'town'],
  ['Bolu', 1275, 375, 'town'], ['Bolu', 1270, 422, 'area'], ['Kastamonu', 1745, 136, 'area'],
  ['Kastamonu', 1747, 181, 'town'], ['Çankırı', 1684, 395, 'area'], ['Çankırı', 1725, 417, 'town'],
];

const LABEL_CLASS = {
  city: 'fill-[#3c3c3c] text-[16px]',
  town: 'fill-[#3c3c3c] text-[12px]',
  area: 'fill-[#8b6b98] text-[13px] italic',
};

const AREA = { x: 370, y: -10, width: 1560, height: 620, filterUnits: 'userSpaceOnUse' as const, colorInterpolationFilters: 'sRGB' as const };

type WoodProps = { id: string; edge: number; freq: string; matrix: string; seed: number };

/* Frays the outline of a wood and punches clearings into it. */
function WoodFilter({ id, edge, freq, matrix, seed }: WoodProps) {
  return (
    <filter id={id} {...AREA}>
      <feTurbulence type="fractalNoise" baseFrequency="0.09" numOctaves={4} seed={seed} result="n" />
      <feDisplacementMap in="SourceGraphic" in2="n" scale={edge} xChannelSelector="R" yChannelSelector="G" result="d" />
      <feTurbulence type="fractalNoise" baseFrequency={freq} numOctaves={4} seed={seed + 9} />
      <feColorMatrix values={matrix} result="m" />
      <feComposite in="d" in2="m" operator="in" />
    </filter>
  );
}

function DisplaceFilter({ id, freq, scale, seed }: { id: string; freq: number; scale: number; seed: number }) {
  return (
    <filter id={id} {...AREA}>
      <feTurbulence type="fractalNoise" baseFrequency={freq} numOctaves={2} seed={seed} result="n" />
      <feDisplacementMap in="SourceGraphic" in2="n" scale={scale} xChannelSelector="R" yChannelSelector="G" />
    </filter>
  );
}

function MapFilters() {
  return (
    <defs>
      <WoodFilter id="woodDense" edge={20} freq="0.07" seed={3} matrix="0 0 0 0 0  0 0 0 0 0  0 0 0 0 0  14 0 0 0 -3.9" />
      <WoodFilter id="woodSparse" edge={34} freq="0.07 0.09" seed={12} matrix="0 0 0 0 0  0 0 0 0 0  0 0 0 0 0  12 0 0 0 -4.4" />
      <WoodFilter id="woodScatter" edge={40} freq="0.06 0.08" seed={31} matrix="0 0 0 0 0  0 0 0 0 0  0 0 0 0 0  12 0 0 0 -6" />
      <DisplaceFilter id="ragged" freq={0.12} scale={8} seed={5} />
      <DisplaceFilter id="coast" freq={0.15} scale={5} seed={5} />
      <DisplaceFilter id="wiggle" freq={0.1} scale={5} seed={2} />
      <filter id="markerShadow" x="-20%" y="-20%" width="150%" height="150%">
        <feDropShadow dx={3} dy={6} stdDeviation={4} floodColor="#000" floodOpacity={0.6} />
      </filter>
    </defs>
  );
}

function MissionMap() {
  return (
    <svg
      viewBox="383 0 1532 593"
      preserveAspectRatio="xMinYMin slice"
      className="block h-full w-full bg-[#f2efe9]"
      role="img"
      aria-label="Harita"
    >
      <MapFilters />
      {STYLES.map(([layer, fill, stroke, width, filter]) => (
        <g key={layer} filter={filter}>
          {TILES.map((tile) => (
            <g
              key={`${tile.x}-${tile.y}`}
              transform={`translate(${tile.x} ${tile.y}) scale(0.33333)`}
              fill={fill}
              stroke={stroke}
              strokeWidth={width}
              strokeLinejoin="round"
              strokeDasharray={layer === 'ferry' ? '13 11' : undefined}
            >
              {(tile[layer] ?? []).map((d) => <path key={d} d={d} />)}
            </g>
          ))}
        </g>
      ))}
      <g className="font-['Noto_Sans',sans-serif]" stroke="#ffffff" strokeOpacity={0.7} strokeWidth={3} strokeLinejoin="round" paintOrder="stroke">
        {LABELS.map(([text, x, y, kind]) => (
          <text key={`${text}${x}`} x={x} y={y} className={LABEL_CLASS[kind]}>{text}</text>
        ))}
      </g>
      <g transform="translate(640 200) scale(0.33333)">
        <path
          filter="url(#markerShadow)"
          fill="#ee1c24"
          d="M141 45C149 55 153 75 155 106L238 150Q246 156 241 163C210 164 182 160 157 154L153 194C176 204 183 216 183 237Q165 229 149 230L141 244 133 230Q116 229 99 237C99 216 110 204 132 194L127 152C100 156 75 162 46 168Q36 160 44 152L127 106C129 75 133 55 141 45Z"
        />
        <path fill="#e60000" fillRule="evenodd" d="M330 386C320 348 270 312 270 267A60 60 0 1 1 390 267C390 312 340 348 330 386ZM330 244A23 23 0 1 0 330 290A23 23 0 1 0 330 244Z" />
        <circle cx={330} cy={267} r={30} fill="none" stroke="#b80000" strokeWidth={15} />
      </g>
    </svg>
  );
}

function TeamLogo() {
  return (
    <svg viewBox="0 0 288 297" className="block h-full w-full" role="img" aria-label="Takım logosu">
      <path fill="#0a0a0a" d="M124 48H180L206 76 214 80H264L232 108 230 128 240 160 226 182H78L62 160 72 128 68 106 36 78H88L96 76Z" />
      <path fill="#a9abae" d="M100 76 122 54 112 84H96ZM182 54 206 80H192ZM70 104 78 118 74 138 68 128ZM228 108 226 140 218 122Z" />
      <path fill="#c9cacd" d="M104 134 124 120 134 132 136 166 126 182 104 166ZM198 134 178 120 168 132 166 166 176 182 198 166Z" />
      <path fill="#0a0a0a" d="M90 132H120V135H90ZM90 140H120V143H90ZM92 148H120V151H92ZM182 132H212V135H182ZM182 140H212V143H182ZM182 148H212V151H182Z" />
      <path fill="#dcf900" d="M128 52H176L190 84H172L164 66H140L130 84H114ZM66 92 80 88 86 96H124L128 102H84L70 102ZM232 92 218 88 212 96H178L174 102H216L230 102Z" />
      <path fill="#dcf900" d="M94 110H130L138 118H166L174 110H208L204 116H178L170 126 166 146 158 152V166H144V152L136 146 132 126 124 116H96Z" />
      <path fill="#dcf900" d="M88 124 102 124 84 158 96 178 84 182 62 162ZM214 124 202 124 220 158 208 178 218 182 240 162Z" />
      <circle cx={151} cy={131} r={10} fill="none" stroke="#0a0a0a" strokeWidth={4} />
      <path fill="#0a0a0a" d="M134 84 142 68H162L170 86 174 108H164L152 116 140 108H128Z" />
      <path fill="#f2f2f2" d="M136 84 144 78 152 88 146 104 138 100Z" />
      <path fill="#dcf900" d="M144 100H158L151 112Z" />
      <path fill="#0a0a0a" d="M72 206H222V238L198 242 152 246 92 242 74 236Z" />
      <g className="font-['Liberation_Sans',sans-serif] font-bold" textAnchor="middle">
        <text x={148} y={211} fill="#dcf900" className="text-[48px] italic" stroke="#0a0a0a" strokeWidth={7} strokeLinejoin="round" paintOrder="stroke">BALER</text>
        <text x={148} y={236} fill="#dcf900" className="text-[14px]">TEKNOPLUS TAKIMI</text>
      </g>
    </svg>
  );
}

const COMMANDS = [
  { label: 'BAGLAN', tone: 'bg-[#005800] border-t-[#005800]' },
  { label: 'MANUEL MOD', tone: 'bg-[#000058] border-t-[#2222a8]' },
  { label: 'TAM OTONOM', tone: 'bg-[#000058] border-t-[#1c1c8c]' },
  { label: 'SIRADAKİ GÖREVİ YAP', tone: 'bg-[#005858] border-t-[#1f9a96]' },
  { label: 'GELDİĞİNİ BİLDİR', tone: 'bg-[#005858] border-t-[#1f9a96]' },
  { label: 'YUVAYA DÖN', tone: 'bg-[#580000] border-t-[#8c2222]' },
];

const READOUTS = [
  { id: 'task', text: 'Yapılan görev:\n 40.873163 29.250475', tone: 'bg-[#cc0000]' },
  { id: 'target', text: 'X: 41.026145, Y: 28.95579', tone: 'bg-[#008000]' },
  { id: 'position', text: 'X: 41.026145, Y: 28.95579', tone: 'bg-[#0000cc]' },
];

export default function App() {
  return (
    <main className="h-screen overflow-hidden bg-black font-['Roboto',sans-serif] text-[18px] leading-[22px] text-[#f4f4f4]">
      <div className="flex h-[calc(100%+3px)]">
        <nav className="grid w-1/5 shrink-0 grid-rows-6 border-r border-[#808080]">
          {COMMANDS.map(({ label, tone }) => (
            <button key={label} type="button" className={`border-t border-b-2 border-b-[#5c5c5c] pb-px ${tone}`}>
              {label}
            </button>
          ))}
        </nav>
        <div className="flex min-w-0 flex-1 flex-col">
          <section className="relative h-3/5 border-b border-[#808080]">
            <MissionMap />
            <div className="absolute top-0 right-0 h-[99px] w-24 bg-[#f7f7f7]">
              <TeamLogo />
            </div>
          </section>
          <section className="flex h-2/5">
            <div className="grid w-[31.33%] grid-rows-3">
              {READOUTS.map(({ id, text, tone }) => (
                <div key={id} className={`flex items-center justify-center pb-0.5 ${tone}`}>
                  <p className="whitespace-pre">{text}</p>
                </div>
              ))}
            </div>
            <div className="flex flex-1 items-center justify-center bg-[#330000] pb-0.5">
              <p role="status">BAĞLANTI BAŞARILI</p>
            </div>
          </section>
        </div>
      </div>
    </main>
  );
}
